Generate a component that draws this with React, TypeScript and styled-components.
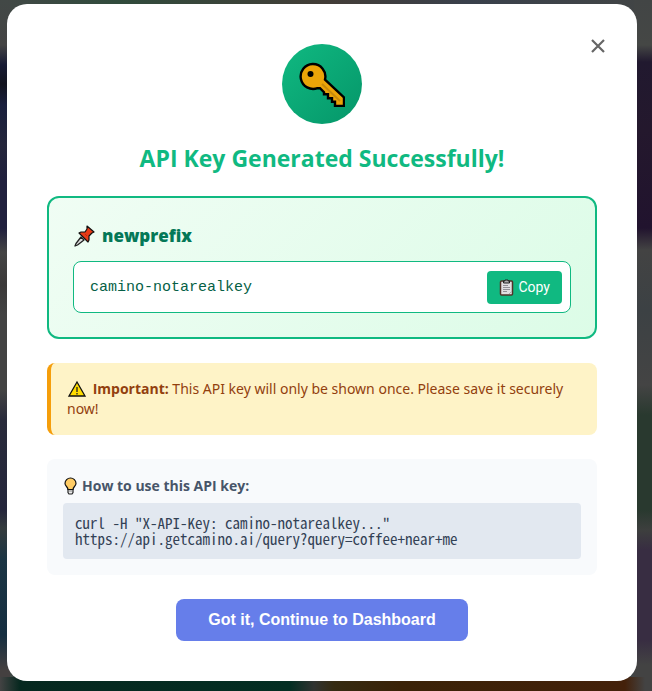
import React, { useState } from "react";
import styled, { createGlobalStyle } from "styled-components";

const sans = `"Open Sans", "Noto Sans", sans-serif`;

const GlobalStyle = createGlobalStyle`
  *, *::before, *::after { box-sizing: border-box; }
  body { margin: 0; font-family: ${sans}; background: #434343; }
  button { border: 0; cursor: pointer; }
`;

const Overlay = styled.div`
  min-height: 100vh;
  padding: 4px 15px 10px 7px;
  background:
    linear-gradient(90deg, #434343 0, #06281f 20px, #032e23 290px, #303331 314px, #352b12 334px, #3a2207 400px, #44210a 625px, #434343 645px) bottom / 100% 14px no-repeat,
    linear-gradient(180deg, #424846 0, #444444 45px, #171b34 65px, #12141f 84px, #191f3d 105px, #24263b 145px, #20203d 180px, #20203d 228px, #444444 252px, #3b3939 285px, #434343 315px, #434343 390px, #292b3b 420px, #24263b 510px, #343b3d 528px, #1b3544 560px, #152e40 635px, #444040 670px) left / 10px 100% no-repeat,
    linear-gradient(180deg, #424545 0, #454745 45px, #21192f 62px, #24182d 130px, #21132e 228px, #434343 250px, #3c4144 310px, #444444 385px, #29392f 415px, #29392f 510px, #3d3f3e 530px, #382d42 550px, #382d42 640px, #434343 665px) right / 18px 100% no-repeat,
    linear-gradient(90deg, #424846, #304b3c 18%, #433d37 50%, #39404b 72%, #424545);
`;

const Dialog = styled.main`
  position: relative;
  display: flex;
  flex-direction: column;
  padding: 40px;
  border-radius: 20px;
  background: #fff;
`;

const CloseButton = styled.button`
  position: absolute;
  top: 26px;
  right: 23px;
  display: grid;
  place-items: center;
  width: 32px;
  height: 32px;
  padding: 0;
  background: none;
  color: #666;
`;

const KeyBadge = styled.div`
  display: grid;
  place-items: center;
  align-self: center;
  width: 80px;
  height: 80px;
  border-radius: 50%;
  background: linear-gradient(135deg, #10b981, #059669);
`;

const Title = styled.h1`
  margin: 16px 0 20px;
  font-size: 23px;
  line-height: 36px;
  font-weight: 700;
  text-align: center;
  color: #10b981;
`;

const KeyCard = styled.section`
  padding: 24px;
  border: 2px solid #10b981;
  border-radius: 12px;
  background: linear-gradient(135deg, #f0fdf4, #dcfce7);
`;

const KeyName = styled.h2`
  display: flex;
  align-items: center;
  gap: 7px;
  margin: 0 0 12px;
  font-size: 17px;
  line-height: 27px;
  font-weight: 800;
  color: #047857;
`;

const KeyRow = styled.div`
  display: flex;
  align-items: center;
  justify-content: space-between;
  gap: 12px;
  min-height: 52px;
  padding: 8px 8px 8px 16px;
  border: 1px solid #10b981;
  border-radius: 8px;
  background: #fff;
`;

const KeyValue = styled.code`
  font-family: "Liberation Mono", monospace;
  font-size: 15px;
  color: #065f46;
  overflow-wrap: anywhere;
`;

const CopyButton = styled.button`
  display: flex;
  align-items: center;
  gap: 4px;
  height: 33px;
  padding: 0 12px;
  border-radius: 4px;
  background: #10b981;
  color: #fff;
  font: 400 14px Roboto, sans-serif;
`;

const Warning = styled.p`
  display: block;
  margin: 24px 0;
  padding: 16px;
  border-left: 4px solid #f59e0b;
  border-radius: 8px;
  background: #fef3c7;
  color: #92400e;
  font-family: "Noto Sans", sans-serif;
  font-size: 14px;
  line-height: 20px;

  svg { margin-right: 2px; vertical-align: -4px; }
  strong { font-family: ${sans}; }
`;

const Usage = styled.section`
  padding: 16px;
  border-radius: 8px;
  background: #f8fafc;
`;

const UsageTitle = styled.h3`
  display: flex;
  align-items: center;
  gap: 4px;
  margin: 0 0 6px;
  font-size: 14px;
  line-height: 22px;
  font-weight: 700;
  color: #475569;
`;

const CodeBlock = styled.pre`
  margin: 0;
  padding: 12px;
  border-radius: 4px;
  background: #e2e8f0;
  color: #334155;
  font: 15px/16px "Noto Sans Mono CJK SC", "DejaVu Sans Mono", monospace;
  white-space: pre-wrap;
  overflow-wrap: anywhere;
`;

const ContinueButton = styled.button`
  align-self: center;
  margin-top: 24px;
  height: 42px;
  padding: 0 32px;
  border-radius: 8px;
  background: #667eea;
  color: #fff;
  font: bold 16px "Liberation Sans", sans-serif;
`;

const CloseIcon = () => (
  <svg width="14" height="14" viewBox="0 0 14 14" fill="none" stroke="currentColor" strokeWidth="2.2" aria-hidden="true">
    <path d="M1 1 13 13M13 1 1 13" />
  </svg>
);

const KeyIcon = () => (
  <svg width="46" height="46" viewBox="0 0 46 46" aria-hidden="true">
    <path d="M13.500 3a12.500 12.500 0 1 0 5 24.200h2.500l4 4v2h4v4h4v3.500h3V45h9v-8.500L26 18.500A12.500 12.500 0 0 0 13.500 3Z" fill="#eba408" stroke="#000" strokeWidth="2.400" />
    <path d="m23 23 18 17" stroke="#c78a0b" strokeWidth="2" />
    <circle cx="11.500" cy="13" r="3" />
  </svg>
);

const PinIcon = () => (
  <svg width="22" height="22" viewBox="0 0 22 22" strokeLinejoin="round" aria-hidden="true">
    <path d="m8 12 3 3-6.500 5-2.500 1 1-2.500Z" fill="#ddd" stroke="#222" strokeWidth="1.300" />
    <path d="m14 1 7 6-2 1-3 3v4l-1 2-9-9 2-1h4l2-3Z" fill="#e93a16" stroke="#111" strokeWidth="1.200" />
    <path d="m12 9 2 2" stroke="#b92c11" />
  </svg>
);

const ClipboardIcon = () => (
  <svg width="15" height="17" viewBox="0 0 15 17" aria-hidden="true">
    <rect x="1.500" y="2" width="12" height="14" rx="1" fill="#e1e0e2" stroke="#513329" strokeWidth="1.500" />
    <path d="M4.500 4V2h1.500V1h3v1h1.500v2Z" fill="#aaa" stroke="#222" />
    <path d="M4 6.500h5M4 8.500h7M4 10.500h7M4 12.500h4" stroke="#929197" />
    <path d="m10 15 3-3" stroke="#aaa" />
  </svg>
);

const WarningIcon = () => (
  <svg width="20" height="18" viewBox="0 0 20 18" aria-hidden="true">
    <path d="m10 2 8 14H2Z" fill="#ffdc00" stroke="#111" strokeWidth="1.300" />
    <path d="M10 7v5M10 13v1.500" stroke="#222" strokeWidth="1.300" />
  </svg>
);

const BulbIcon = () => (
  <svg width="15" height="18" viewBox="0 0 15 18" aria-hidden="true">
    <path d="M5 11v4.500L6 17h3l1-1.500V11" fill="#eee" stroke="#222" strokeWidth="1.200" />
    <path d="M7.500 1A5.500 5.500 0 0 0 2 6.500c0 2.500 3 3.500 3 6h5c0-2.500 3-3.500 3-6A5.500 5.500 0 0 0 7.500 1Z" fill="#ffcc65" stroke="#111" strokeWidth="1.200" />
    <path d="M6 14h3" stroke="#888" />
  </svg>
);

const apiKey = "camino-notarealkey";

export default function App() {
  const [open, setOpen] = useState(true);
  const close = () => setOpen(false);

  return (
    <>
      <GlobalStyle />
      <Overlay>
        {open && (
          <Dialog role="dialog" aria-modal="true" aria-labelledby="dialog-title">
            <CloseButton aria-label="Close" onClick={close}><CloseIcon /></CloseButton>
            <KeyBadge><KeyIcon /></KeyBadge>
            <Title id="dialog-title">API Key Generated Successfully!</Title>
            <KeyCard>
              <KeyName><PinIcon />newprefix</KeyName>
              <KeyRow>
                <KeyValue>{apiKey}</KeyValue>
                <CopyButton onClick={() => navigator.clipboard?.writeText(apiKey)}><ClipboardIcon />Copy</CopyButton>
              </KeyRow>
            </KeyCard>
            <Warning>
              <WarningIcon /> <strong>Important:</strong> This API key will only be shown once. Please save it securely now!
            </Warning>
            <Usage>
              <UsageTitle><BulbIcon />How to use this API key:</UsageTitle>
              <CodeBlock>{`curl -H "X-API-Key: ${apiKey}..."\nhttps://api.getcamino.ai/query?query=coffee+near+me`}</CodeBlock>
            </Usage>
            <ContinueButton onClick={close}>Got it, Continue to Dashboard</ContinueButton>
          </Dialog>
        )}
      </Overlay>
    </>
  );
}
